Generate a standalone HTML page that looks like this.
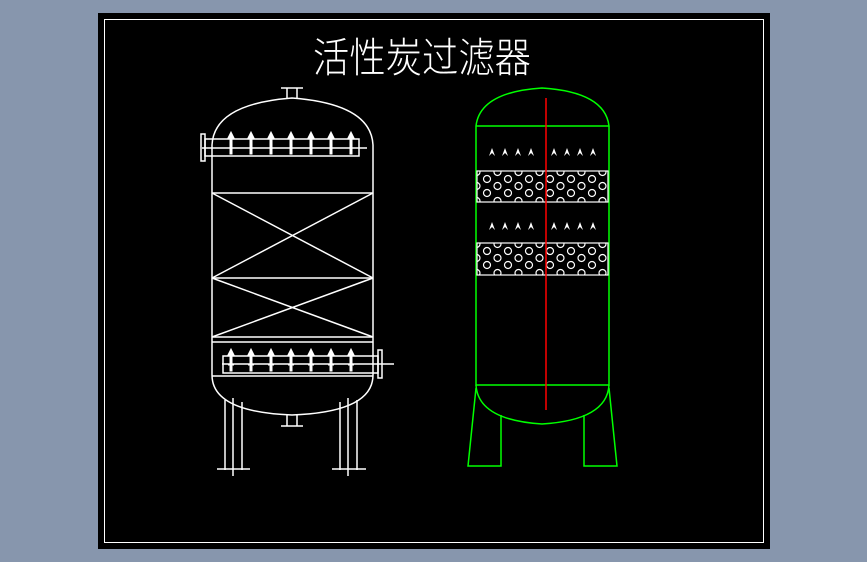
<!DOCTYPE html>
<html><head><meta charset="utf-8"><style>
html,body{margin:0;padding:0;background:#8796ad;}
svg{display:block}
</style></head><body>
<svg id="s" width="867" height="562" viewBox="0 0 867 562" xmlns="http://www.w3.org/2000/svg">
<defs><clipPath id="cp"><rect x="477" y="171" width="131" height="31"/><rect x="477" y="243" width="131" height="32"/></clipPath></defs>
<rect x="0" y="0" width="867" height="562" fill="#8796ad"/>
<rect x="98" y="13" width="672" height="536" fill="#000"/>
<rect x="104.5" y="19.5" width="659" height="523" fill="none" stroke="#fff" stroke-width="1"/>
<text x="313" y="72" font-family="Noto Sans CJK SC, WenQuanYi Zen Hei, sans-serif" font-size="41" font-weight="300" fill="#fff" textLength="218" lengthAdjust="spacingAndGlyphs">活性炭过滤器</text>
<g fill="none" stroke="#fff" stroke-width="1.5">
  <path d="M212 375 V145 Q214 104 292 98 Q371 104 373 145 V375"/>
  <path d="M212 375 Q212 412 292 415 Q373 412 373 375"/>
  <rect x="205" y="139" width="154" height="17"/>
  <line x1="202" y1="148" x2="367" y2="148"/>
  <rect x="201" y="134" width="4" height="27"/>
  <path d="M287 98 V88 H297 V98 M281 88 H303"/>
  <path d="M287 415 V426 H297 V415 M281 426 H303"/>
  <line x1="212" y1="193" x2="373" y2="193"/>
  <line x1="212" y1="278" x2="373" y2="278"/>
  <line x1="212" y1="337" x2="373" y2="337"/>
  <line x1="212" y1="193" x2="373" y2="278"/>
  <line x1="373" y1="193" x2="212" y2="278"/>
  <line x1="212" y1="278" x2="373" y2="337"/>
  <line x1="373" y1="278" x2="212" y2="337"/>
  <line x1="212" y1="342" x2="373" y2="342"/>
  <line x1="212" y1="376" x2="373" y2="376"/>
  <rect x="223" y="356" width="155" height="17"/>
  <line x1="222" y1="364" x2="394" y2="364"/>
  <rect x="378" y="350" width="4" height="28"/>
  <path d="M225 400 V470 M233 398 V476 M242 402 V470 M217 469 H250"/>
  <path d="M340 402 V470 M348 398 V476 M357 400 V470 M332 469 H366"/>
</g>
<g id="nz" fill="#fff" stroke="#fff" stroke-width="1"></g>
<g fill="none" stroke="#00ff00" stroke-width="1.5">
  <path d="M476 385 V126 Q480 92 542 88 Q605 92 609 126 V385 Z"/>
  <line x1="476" y1="126" x2="609" y2="126"/>
  <path d="M476 385 Q478 420 542 424 Q607 420 609 385"/>
  <path d="M476 388 L468 466 H501 V415"/>
  <path d="M609 388 L617 466 H584 V415"/>
</g>
<g fill="none" stroke="#fff" stroke-width="1.2">
  <rect x="477" y="171" width="131" height="31"/>
  <rect x="477" y="243" width="131" height="32"/>
</g>
<g id="circ" fill="none" stroke="#fff" stroke-width="1.2" clip-path="url(#cp)"></g>
<g id="arr" fill="#fff"></g>
<line x1="546" y1="98" x2="546" y2="410" stroke="#ff0000" stroke-width="1.5"/>
</svg>
<script>
var ns="http://www.w3.org/2000/svg";
function el(p,t,a){var e=document.createElementNS(ns,t);for(var k in a)e.setAttribute(k,a[k]);p.appendChild(e);return e;}
var nz=document.getElementById('nz');
[[134,150],[351,367]].forEach(function(r){
 for(var i=0;i<7;i++){var x=231+i*20;
  el(nz,'path',{d:'M'+(x-3)+' '+(r[0]+4)+' L'+x+' '+(r[0]-2)+' L'+(x+3)+' '+(r[0]+4)+' Z'});
  el(nz,'rect',{x:x-1,y:r[0]+4,width:2,height:r[1]-r[0]});
  el(nz,'line',{x1:x-3,y1:r[1]-2,x2:x+3,y2:r[1]-2});
 }});
var c=document.getElementById('circ');
[[171,202],[243,275]].forEach(function(b){
 var rows=[b[0]+1,b[0]+8,b[0]+15,b[0]+22,b[0]+30];
 for(var j=0;j<5;j++){for(var i=-1;i<8;i++){var x=487+i*21+(j%2?0:-10.5);
  el(c,'circle',{cx:x,cy:rows[j],r:3.5});}}
});
var a=document.getElementById('arr');
[152,226].forEach(function(y){
 [492,505,518,531,554,567,580,593].forEach(function(x){
  el(a,'path',{d:'M'+(x-3)+' '+(y+4)+' L'+x+' '+(y-4)+' L'+(x+3)+' '+(y+4)+' L'+x+' '+(y+1)+' Z'});
 });});
</script>
</body></html>
